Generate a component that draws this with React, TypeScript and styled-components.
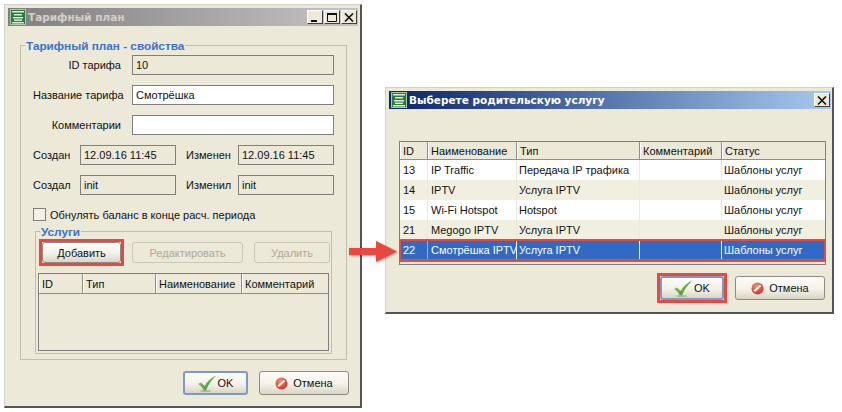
import React from "react";
import styled, { createGlobalStyle } from "styled-components";

const GlobalStyle = createGlobalStyle`
  html, body {
    margin: 0;
    padding: 0;
    background: #fff;
  }
  body {
    font-family: "Liberation Sans", Arial, sans-serif;
    font-size: 11px;
    color: #111;
  }
`;

const Page = styled.div`
  position: relative;
  display: flex;
  align-items: flex-start;
  gap: 23px;
  width: 842px;
  height: 412px;
  padding: 4px 0 0 4px;
  box-sizing: border-box;
  overflow: hidden;
`;

const Window = styled.div<{ $width: number; $height: number }>`
  flex: none;
  width: ${(p) => p.$width}px;
  height: ${(p) => p.$height}px;
  box-sizing: border-box;
  padding: 3px 2px 4px 3px;
  background: #ece9d8;
  border: 1px solid #d4d0c8;
  border-right: 2px solid #55554f;
  border-bottom: 2px solid #55554f;
  display: flex;
  flex-direction: column;
`;

const SubWindow = styled(Window)`
  margin-top: 83px;
  padding-right: 1px;
`;

const TitleBar = styled.div<{ $active?: boolean }>`
  flex: none;
  height: 18px;
  display: flex;
  align-items: center;
  gap: 2px;
  padding: 0 1px 0 2px;
  background: ${(p) =>
    p.$active
      ? "linear-gradient(90deg, #0a246a, #a6caf0)"
      : "linear-gradient(90deg, #7f7f7f, #c4c4c4)"};
`;

const TitleText = styled.span<{ $active?: boolean }>`
  flex: 1;
  font-family: "DejaVu Sans", sans-serif;
  font-weight: 700;
  font-size: 10.5px;
  white-space: nowrap;
  color: ${(p) => (p.$active ? "#fff" : "#d4d0c8")};
`;

const CaptionButtons = styled.div`
  display: flex;
  gap: 1px;
`;

const CaptionButton = styled.div`
  width: 16px;
  height: 14px;
  box-sizing: border-box;
  background: #ece9d8;
  border: 1px solid;
  border-color: #fff #404040 #404040 #fff;
  display: flex;
  align-items: center;
  justify-content: center;
`;

const Body = styled.div`
  flex: 1;
  display: flex;
  flex-direction: column;
  min-height: 0;
`;

const Group = styled.fieldset`
  margin: 0;
  padding: 0;
  min-width: 0;
  border: 1px solid #bfbfad;
  box-sizing: border-box;
`;

const MainGroup = styled(Group)`
  margin: 12px 11px 0 12px;
  height: 322px;
  padding: 0 12px;
`;

const ServicesGroup = styled(Group)`
  margin: 3px 2px 0 2px;
  height: 130px;
  padding: 0 2px;
`;

const Legend = styled.legend<{ $shift: number }>`
  margin-left: ${(p) => p.$shift}px;
  padding: 0 1px;
  font-weight: 700;
  font-size: 11.75px;
  line-height: 15px;
  color: #3a72c8;
`;

const TopRows = styled.div`
  display: grid;
  grid-template-columns: 88px 202px;
  column-gap: 11px;
  row-gap: 10px;
  align-items: center;
  margin-top: 2px;
`;

const Label = styled.label`
  text-align: right;
  white-space: nowrap;
`;

const Field = styled.div<{ $editable?: boolean }>`
  height: 20px;
  box-sizing: border-box;
  line-height: 18px;
  padding: 0 3px;
  border: 1px solid #7f7f7f;
  background: ${(p) => (p.$editable ? "#fff" : "transparent")};
`;

const AuditRows = styled.div`
  display: grid;
  grid-template-columns: 47px 96px 62px 96px;
  row-gap: 10px;
  align-items: center;
  margin-top: 10px;
`;

const AuditLabel = styled.label<{ $second?: boolean }>`
  white-space: nowrap;
  padding-left: ${(p) => (p.$second ? "10px" : "0")};
`;

const CheckRow = styled.div`
  display: flex;
  align-items: center;
  gap: 4px;
  margin-top: 13px;
  height: 13px;
`;

const CheckBox = styled.span`
  width: 13px;
  height: 13px;
  box-sizing: border-box;
  border: 1px solid #7f7f7f;
  background: #f2f0e4;
`;

const ToolRow = styled.div`
  display: flex;
  align-items: stretch;
  gap: 11px;
  margin: 3px 0 0 4px;
  height: 21px;
`;

const Button = styled.button<{ $focus?: boolean; $width: number }>`
  flex: none;
  width: ${(p) => p.$width}px;
  padding: 0;
  box-sizing: border-box;
  font: inherit;
  color: #111;
  border-radius: 3px;
  display: flex;
  align-items: center;
  justify-content: center;
  gap: 5px;
  background: linear-gradient(180deg, #fdfcf8 0%, #f3f1e8 55%, #d9d5c6 100%);
  border: ${(p) => (p.$focus ? "2px solid #7c9ac4" : "1px solid #8c8c84")};
`;

const MutedButton = styled.button<{ $width: number }>`
  flex: none;
  width: ${(p) => p.$width}px;
  padding: 0;
  box-sizing: border-box;
  font: inherit;
  color: #aca899;
  background: transparent;
  border: 1px solid #c9c7b6;
  border-radius: 3px;
`;

const MarkFrame = styled.div`
  display: flex;
  align-items: stretch;
  margin: -3px;
  border: 3px solid #e8483f;
`;

const TableBox = styled.div<{ $width: number; $height: number }>`
  position: relative;
  width: ${(p) => p.$width}px;
  height: ${(p) => p.$height}px;
  box-sizing: border-box;
  border: 1px solid #7f7f7f;
  flex: none;
`;

const ServicesTableBox = styled(TableBox)`
  margin: 10px 0 0 0;
`;

const ChooserTableBox = styled(TableBox)`
  margin: 32px 0 0 10px;
`;

const Table = styled.table`
  border-collapse: separate;
  border-spacing: 0;
  table-layout: fixed;
  width: 100%;
`;

const Head = styled.th`
  height: 18px;
  padding: 0 3px;
  box-sizing: border-box;
  text-align: left;
  font-weight: 400;
  white-space: nowrap;
  overflow: hidden;
  border-right: 1px solid #8f8f8a;
  border-bottom: 1px solid #8f8f8a;
  box-shadow: inset 1px 0 0 #fff;
  &:last-child {
    border-right: none;
  }
`;

const TallHead = styled(Head)`
  height: 20px;
`;

const Cell = styled.td<{ $selected?: boolean; $odd?: boolean; $focused?: boolean }>`
  height: 20px;
  padding: 0 2px 0 3px;
  box-sizing: border-box;
  white-space: nowrap;
  overflow: hidden;
  color: ${(p) => (p.$selected ? "#fff" : "#111")};
  background: ${(p) => (p.$selected ? "#316ac5" : p.$odd ? "#f1efdf" : "#fff")};
  border-right: 1px solid ${(p) => (p.$focused ? "#f0a030" : p.$selected ? "#f4f4f4" : "#ece9d8")};
  &:nth-child(n + 3) {
    padding-left: 2px;
  }
  &:last-child {
    border-right: none;
  }
`;

const RowMark = styled.div`
  position: absolute;
  left: -1px;
  right: -1px;
  top: 97px;
  height: 23px;
  box-sizing: border-box;
  border: 2px solid #e8483f;
  border-bottom-width: 3px;
  pointer-events: none;
`;

const Footer = styled.div<{ $pad: number; $top: number }>`
  display: flex;
  align-items: stretch;
  justify-content: flex-end;
  gap: 11px;
  height: 24px;
  margin-top: ${(p) => p.$top}px;
  padding-right: ${(p) => p.$pad}px;
`;

const Arrow = styled.svg`
  position: absolute;
  left: 349px;
  top: 241px;
  filter: drop-shadow(1px 1px 1px rgba(0, 0, 0, 0.35));
`;

const CheckGlyph = styled.svg`
  margin-right: -4px;
`;

function AppIcon() {
  return (
    <svg width="16" height="16" viewBox="0 0 16 16">
      <rect width="16" height="16" fill="#2d7a3b" />
      <rect x="0.5" y="0.5" width="15" height="15" fill="none" stroke="#a9c8a4" />
      <g fill="#dceadb">
        <rect x="2" y="2" width="12" height="1.5" />
        <rect x="4" y="5" width="8" height="1.5" />
        <rect x="3" y="8" width="10" height="1.5" />
        <rect x="4" y="10.5" width="8" height="1.5" />
        <rect x="2" y="13" width="12" height="1.5" />
      </g>
    </svg>
  );
}

function CloseGlyph() {
  return (
    <svg width="10" height="9" viewBox="0 0 10 9">
      <path d="M1 0.5 L9 8.5 M9 0.5 L1 8.5" stroke="#111" strokeWidth="1.6" fill="none" />
    </svg>
  );
}

function CheckIcon() {
  return (
    <CheckGlyph width="19" height="19" viewBox="0 0 20 19">
      <defs>
        <linearGradient id="checkFill" x1="0" y1="0" x2="1" y2="1">
          <stop offset="0" stopColor="#9ccf6a" />
          <stop offset="1" stopColor="#2f8a2c" />
        </linearGradient>
      </defs>
      <ellipse cx="8" cy="17.5" rx="6" ry="1.2" fill="#b5b3a5" />
      <path
        d="M0 10 L3 8.5 L7 12 C10 7 14 3 19.5 1 C15 5 11 10 8.5 16.5 L6 16.5 C4.5 13.5 2.5 11.5 0 10 Z"
        fill="url(#checkFill)"
      />
    </CheckGlyph>
  );
}

function CancelIcon() {
  return (
    <svg width="13" height="13" viewBox="0 0 13 13">
      <defs>
        <radialGradient id="cancelFill" cx="0.4" cy="0.3" r="0.8">
          <stop offset="0" stopColor="#f58a70" />
          <stop offset="1" stopColor="#cf2a1c" />
        </radialGradient>
      </defs>
      <circle cx="6.5" cy="6.5" r="6" fill="url(#cancelFill)" />
      <path d="M3.2 9.2 L9.5 3.5" stroke="#fff" strokeWidth="2.2" />
    </svg>
  );
}

function OkButton({ width }: { width: number }) {
  return (
    <Button $width={width} $focus>
      <CheckIcon />
      OK
    </Button>
  );
}

function CancelButton() {
  return (
    <Button $width={90}>
      <CancelIcon />
      Отмена
    </Button>
  );
}

const services = [
  ["13", "IP Traffic", "Передача IP трафика", "", "Шаблоны услуг"],
  ["14", "IPTV", "Услуга IPTV", "", "Шаблоны услуг"],
  ["15", "Wi-Fi Hotspot", "Hotspot", "", "Шаблоны услуг"],
  ["21", "Megogo IPTV", "Услуга IPTV", "", "Шаблоны услуг"],
  ["22", "Смотрёшка IPTV", "Услуга IPTV", "", "Шаблоны услуг"],
];

export default function App() {
  return (
    <Page>
      <GlobalStyle />

      {/* Tariff plan window */}
      <Window $width={358} $height={404}>
        <TitleBar>
          <AppIcon />
          <TitleText>Тарифный план</TitleText>
          <CaptionButtons>
            <CaptionButton>
              <svg width="10" height="9" viewBox="0 0 10 9">
                <rect x="1" y="7" width="6" height="2" fill="#111" />
              </svg>
            </CaptionButton>
            <CaptionButton>
              <svg width="10" height="9" viewBox="0 0 10 9">
                <path d="M0.5 1 H9.5 V8.5 H0.5 Z" fill="none" stroke="#111" />
                <rect x="0" y="0" width="10" height="2" fill="#111" />
              </svg>
            </CaptionButton>
            <CaptionButton>
              <CloseGlyph />
            </CaptionButton>
          </CaptionButtons>
        </TitleBar>
        <Body>
          <MainGroup>
            <Legend $shift={-8}>Тарифный план - свойства</Legend>
            <TopRows>
              <Label>ID тарифа</Label>
              <Field>10</Field>
              <Label>Название тарифа</Label>
              <Field $editable>Смотрёшка</Field>
              <Label>Комментарии</Label>
              <Field $editable />
            </TopRows>
            <AuditRows>
              <AuditLabel>Создан</AuditLabel>
              <Field>12.09.16 11:45</Field>
              <AuditLabel $second>Изменен</AuditLabel>
              <Field>12.09.16 11:45</Field>
              <AuditLabel>Создал</AuditLabel>
              <Field>init</Field>
              <AuditLabel $second>Изменил</AuditLabel>
              <Field>init</Field>
            </AuditRows>
            <CheckRow>
              <CheckBox />
              Обнулять баланс в конце расч. периода
            </CheckRow>
            <ServicesGroup>
              <Legend $shift={2}>Услуги</Legend>
              <ToolRow>
                <MarkFrame>
                  <Button $width={79}>Добавить</Button>
                </MarkFrame>
                <MutedButton $width={111}>Редактировать</MutedButton>
                <MutedButton $width={76}>Удалить</MutedButton>
              </ToolRow>
              <ServicesTableBox $width={291} $height={78}>
                <Table>
                  <colgroup>
                    <col width="44" />
                    <col width="73" />
                    <col width="86" />
                    <col />
                  </colgroup>
                  <thead>
                    <tr>
                      <TallHead>ID</TallHead>
                      <TallHead>Тип</TallHead>
                      <TallHead>Наименование</TallHead>
                      <TallHead>Комментарий</TallHead>
                    </tr>
                  </thead>
                </Table>
              </ServicesTableBox>
            </ServicesGroup>
          </MainGroup>
          <Footer $pad={9} $top={11}>
            <OkButton width={65} />
            <CancelButton />
          </Footer>
        </Body>
      </Window>

      {/* Parent service picker */}
      <SubWindow $width={449} $height={227}>
        <TitleBar $active>
          <AppIcon />
          <TitleText $active>Выберете родительскую услугу</TitleText>
          <CaptionButton>
            <CloseGlyph />
          </CaptionButton>
        </TitleBar>
        <Body>
          <ChooserTableBox $width={427} $height={124}>
            <Table>
              <colgroup>
                <col width="28" />
                <col width="89" />
                <col width="123" />
                <col width="82" />
                <col />
              </colgroup>
              <thead>
                <tr>
                  <Head>ID</Head>
                  <Head>Наименование</Head>
                  <Head>Тип</Head>
                  <Head>Комментарий</Head>
                  <Head>Статус</Head>
                </tr>
              </thead>
              <tbody>
                {services.map((row, i) => (
                  <tr key={row[0]}>
                    {row.map((text, j) => (
                      <Cell
                        key={j}
                        $odd={i % 2 === 1}
                        $selected={i === 4}
                        $focused={i === 4 && j === 0}
                      >
                        {text}
                      </Cell>
                    ))}
                  </tr>
                ))}
              </tbody>
            </Table>
            <RowMark />
          </ChooserTableBox>
          <Footer $pad={6} $top={11}>
            <MarkFrame>
              <OkButton width={64} />
            </MarkFrame>
            <CancelButton />
          </Footer>
        </Body>
      </SubWindow>

      <Arrow width="50" height="24" viewBox="0 0 50 24">
        <path d="M0 7 H27 V0 L48 10.5 L27 21 V14 H0 Z" fill="#e8483f" />
      </Arrow>
    </Page>
  );
}
